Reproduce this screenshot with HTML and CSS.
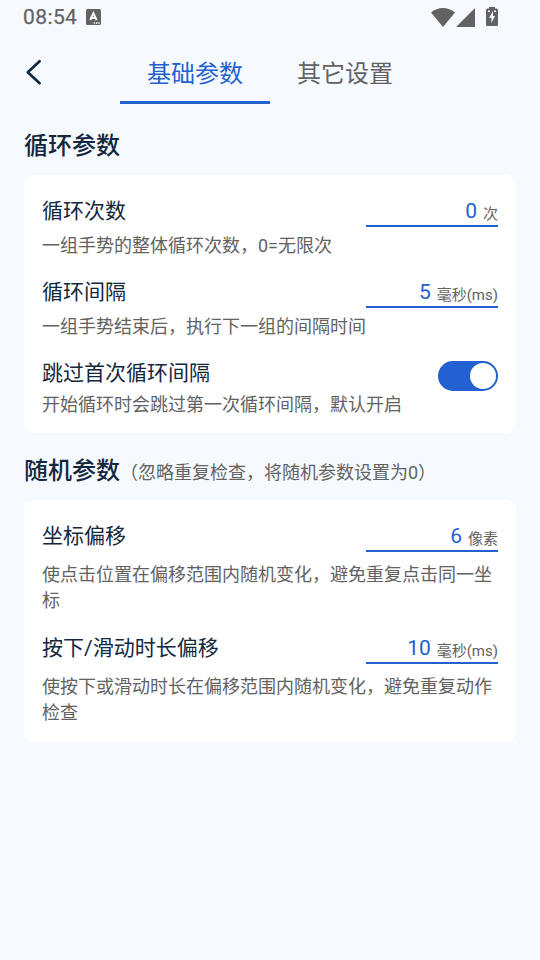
FILE: index.html
```html
<!DOCTYPE html>
<html lang="zh-CN">
<head>
<meta charset="utf-8">
<title>基础参数</title>
<link rel="stylesheet" href="styles.css">
</head>
<body>
<header class="status">
  <span class="clock">08:54</span>
  <svg class="ime" width="15" height="16" viewBox="0 0 15 16"><rect width="15" height="16" rx="1.500" fill="#626262"/><path d="M4.200 11 7.400 4.200 10.600 11M5.500 9h3.800" fill="none" stroke="#fff" stroke-width="1.900"/><path d="M7.700 13.300h1.400v1.400H7.700zM10 13.300h1.400v1.400H10zM12.300 13.300h1.400v1.400h-1.400z" fill="#fff"/></svg>
  <span class="tray">
    <svg width="24" height="19" viewBox="0 0 24 19"><path d="M0 4.600C6.800-1.500 17.200-1.500 24 4.600L12 19z" fill="#626262"/></svg>
    <svg class="signal" width="19" height="19" viewBox="0 0 19 19"><path d="M19 0v19H0z" fill="#626262"/></svg>
    <svg class="battery" width="12" height="20" viewBox="0 0 12 20"><path fill-rule="evenodd" d="M3 0h6v1.500h1.500Q12 1.500 12 3v14.800Q12 19 10.600 19H1.400Q0 19 0 17.800V3Q0 1.500 1.500 1.500H3zM7 4 3 10.800h2.400V16L9 9H7zM2 3.500h2V5H2zM8 3.500h2V5H8z" fill="#626262"/></svg>
  </span>
</header>
<nav class="bar">
  <svg class="back" width="18" height="28" viewBox="0 0 18 28"><path d="M15.600 3.200 3.800 14.200 15.600 25.200" fill="none" stroke="#13273d" stroke-width="2.700" stroke-linecap="round" stroke-linejoin="round"/></svg>
  <div class="tabs">
    <span class="tab active">基础参数</span>
    <span class="tab">其它设置</span>
  </div>
</nav>
<main>
  <h2 class="title">循环参数</h2>
  <section class="card">
    <div class="item">
      <div class="head"><span class="label">循环次数</span><span class="field"><span class="value">0</span><span class="unit">次</span></span></div>
      <p class="desc">一组手势的整体循环次数，0=无限次</p>
    </div>
    <div class="item">
      <div class="head"><span class="label">循环间隔</span><span class="field"><span class="value">5</span><span class="unit">毫秒(ms)</span></span></div>
      <p class="desc">一组手势结束后，执行下一组的间隔时间</p>
    </div>
    <div class="item toggle">
      <div>
        <div class="head"><span class="label">跳过首次循环间隔</span></div>
        <p class="desc">开始循环时会跳过第一次循环间隔，默认开启</p>
      </div>
      <span class="switch"><span class="knob"></span></span>
    </div>
  </section>
  <h2 class="title">随机参数<span class="note">（忽略重复检查，将随机参数设置为0）</span></h2>
  <section class="card loose">
    <div class="item">
      <div class="head"><span class="label">坐标偏移</span><span class="field"><span class="value">6</span><span class="unit">像素</span></span></div>
      <p class="desc">使点击位置在偏移范围内随机变化，避免重复点击同一坐标</p>
    </div>
    <div class="item">
      <div class="head"><span class="label">按下/滑动时长偏移</span><span class="field"><span class="value">10</span><span class="unit">毫秒(ms)</span></span></div>
      <p class="desc">使按下或滑动时长在偏移范围内随机变化，避免重复动作检查</p>
    </div>
  </section>
</main>
</body>
</html>
```
FILE: styles.css
```css
* { box-sizing: border-box; }
body {
  margin: 0;
  height: 960px;
  overflow: hidden;
  background: #f6faff;
  color: #13273d;
  font-family: Roboto, "Noto Sans CJK SC", sans-serif;
}
svg { display: block; flex: none; }
.status {
  display: flex;
  align-items: center;
  height: 34px;
  padding: 0 42px 0 23px;
  color: #626262;
}
.clock { font-size: 21px; font-weight: 400; letter-spacing: .4px; width: 63px; -webkit-text-stroke: .25px #626262; }
.tray { display: flex; align-items: center; margin-left: auto; }
.signal { margin-left: 1px; }
.battery { margin-left: 11px; }
.bar { display: flex; height: 70px; padding: 0 24px; }
.back { margin-top: 24px; }
.tabs { display: flex; margin-left: 78px; }
.tab {
  width: 150px;
  height: 70px;
  padding-top: 22px;
  line-height: 36px;
  font-size: 24px;
  text-align: center;
  color: #626262;
}
.active { color: #2360d2; border-bottom: 3px solid #2360d2; }
main { padding: 24px 24px 0; }
.title {
  margin: 0;
  height: 36px;
  line-height: 36px;
  font-size: 24px;
  font-weight: 500;
  white-space: nowrap;
}
.note { font-size: 18px; font-weight: 400; color: #626262; }
.card {
  margin: 11px 0 20px;
  padding: 18px 18px 16px;
  border-radius: 10px;
  background: #fff;
}
.item + .item { margin-top: 16px; }
.head { display: flex; justify-content: space-between; height: 34px; }
.label { font-size: 21px; line-height: 36px; }
.field {
  display: flex;
  justify-content: flex-end;
  align-items: flex-start;
  width: 132px;
  border-bottom: 2px solid #2360d2;
}
.value { color: #2360d2; font-size: 21px; line-height: 36px; }
.unit { margin-left: 6px; color: #626262; font-size: 15px; line-height: 43px; }
.desc { margin: 6px 0 -1px; font-size: 18px; line-height: 26px; color: #626262; }
.toggle { display: flex; justify-content: space-between; align-items: flex-start; }
.toggle .desc { margin-top: 3px; }
.switch {
  display: flex;
  justify-content: flex-end;
  width: 60px;
  height: 30px;
  margin-top: 6px;
  padding: 2px;
  border-radius: 15px;
  background: #2360d2;
}
.knob { width: 26px; height: 26px; border-radius: 50%; background: #fff; }
.loose { padding-bottom: 17px; }
.loose .desc { margin-top: 10px; }
.loose .item + .item { margin-top: 17px; }
```
